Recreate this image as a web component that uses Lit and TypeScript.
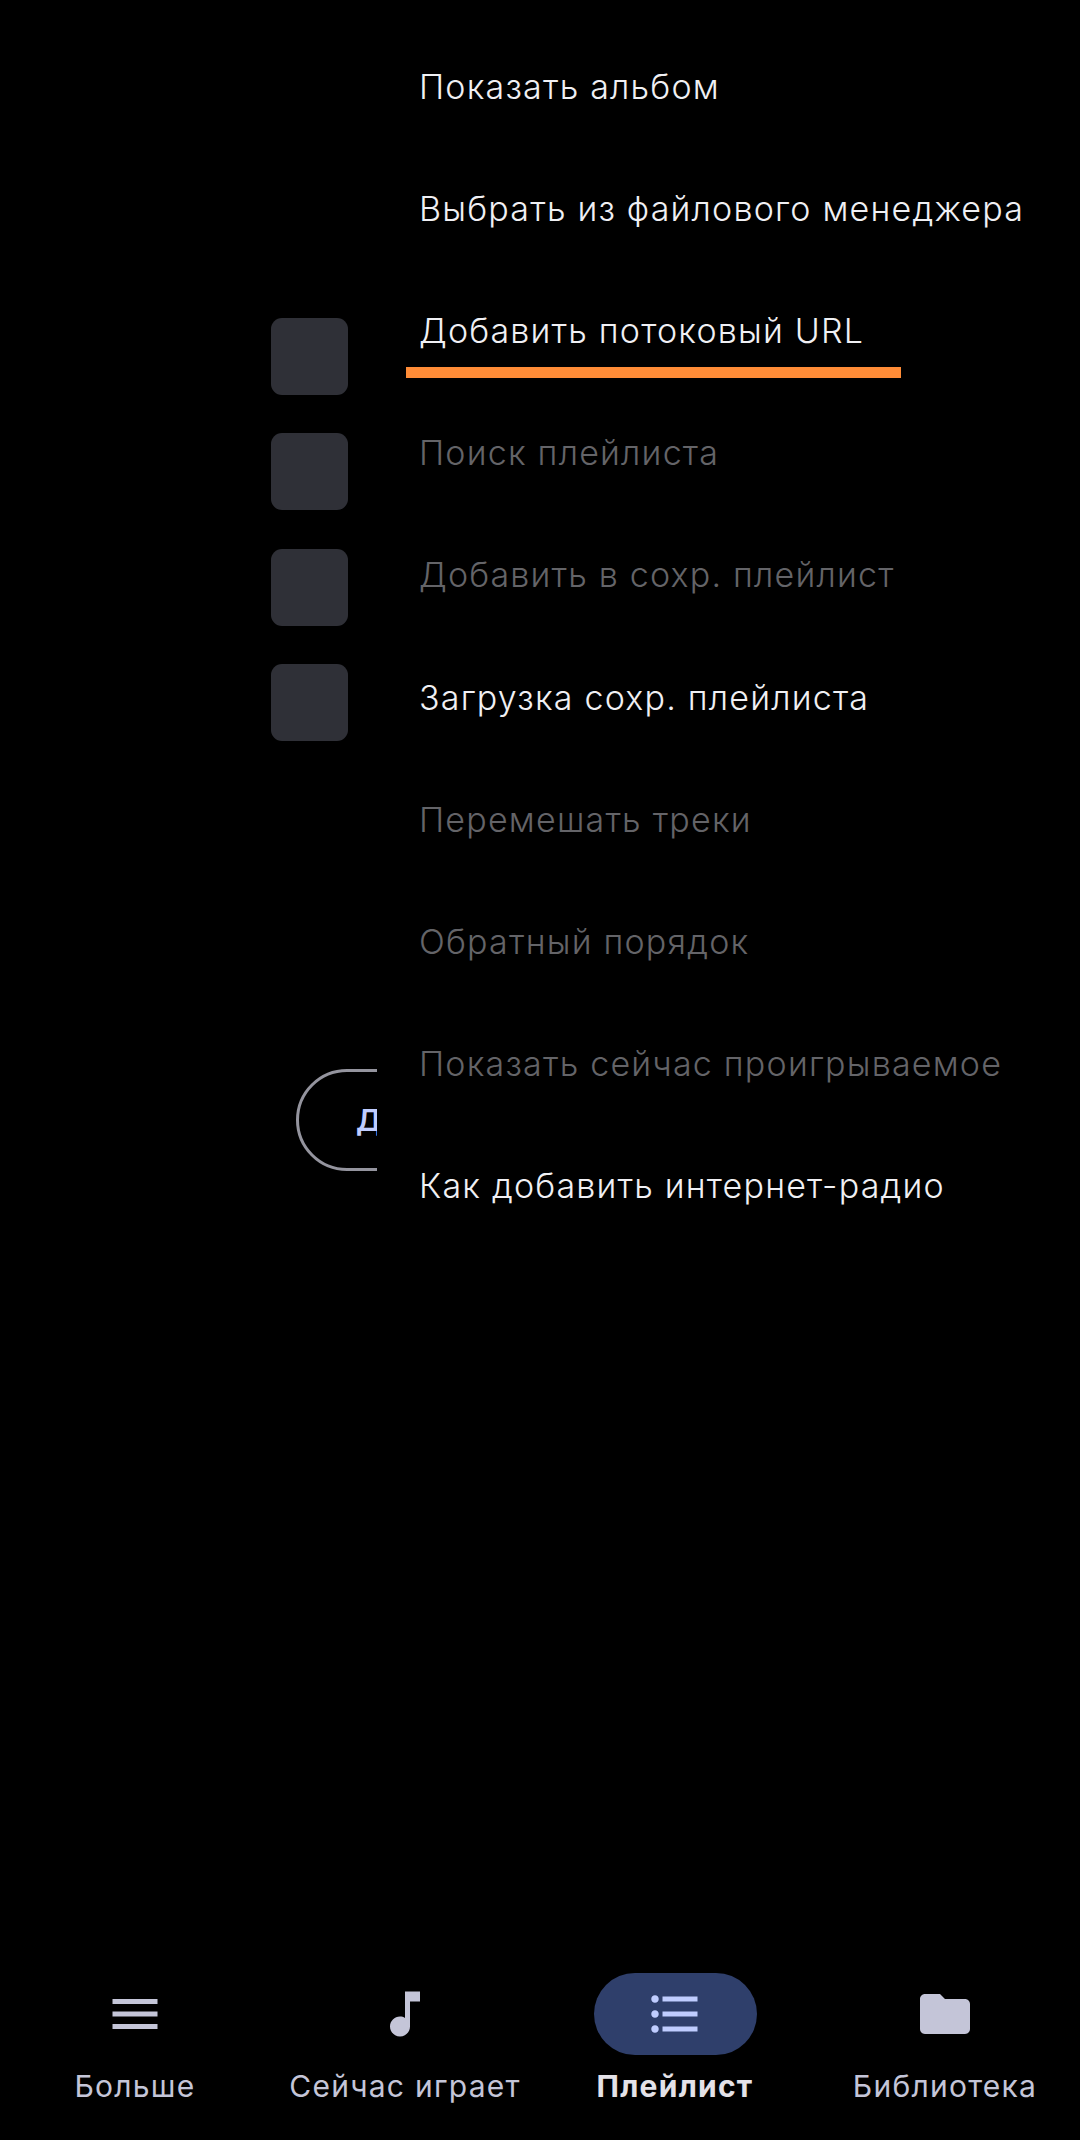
import { LitElement, html, css, svg } from 'lit'
import { customElement } from 'lit/decorators.js'

const menuItems = [
  { label: 'Показать альбом', off: false },
  { label: 'Выбрать из файлового менеджера', off: false },
  { label: 'Добавить потоковый URL', off: false },
  { label: 'Поиск плейлиста', off: true },
  { label: 'Добавить в сохр. плейлист', off: true },
  { label: 'Загрузка сохр. плейлиста', off: false },
  { label: 'Перемешать треки', off: true },
  { label: 'Обратный порядок', off: true },
  { label: 'Показать сейчас проигрываемое', off: true },
  { label: 'Как добавить интернет-радио', off: false },
]

const tabs = [
  { label: 'Больше', icon: svg`<path d="M3 18h18v-2H3v2zm0-5h18v-2H3v2zm0-7v2h18V6H3z" />` },
  { label: 'Сейчас играет', icon: svg`<path d="M12 3v10.55c-.59-.34-1.27-.55-2-.55-2.21 0-4 1.79-4 4s1.79 4 4 4 4-1.79 4-4V7h4V3h-6z" />` },
  { label: 'Плейлист', active: true, icon: svg`<path d="M4 10.5c-.83 0-1.5.67-1.5 1.5s.67 1.5 1.5 1.5 1.5-.67 1.5-1.5-.67-1.5-1.5-1.5zm0-6c-.83 0-1.5.67-1.5 1.5S3.17 7.5 4 7.5 5.5 6.83 5.5 6 4.83 4.5 4 4.5zm0 12c-.83 0-1.5.68-1.5 1.5s.68 1.5 1.5 1.5 1.5-.68 1.5-1.5-.67-1.5-1.5-1.5zM7 19h14v-2H7v2zm0-6h14v-2H7v2zm0-8v2h14V5H7z" />` },
  { label: 'Библиотека', icon: svg`<path d="M10 4H4c-1.1 0-2 .9-2 2v12c0 1.1.9 2 2 2h16c1.1 0 2-.9 2-2V8c0-1.1-.9-2-2-2h-8l-2-2z" />` },
]

@customElement('app-root')
export class AppRoot extends LitElement {
  static styles = css`
    :host {
      display: flex;
      flex-direction: column;
      position: relative;
      width: 1080px;
      height: 2140px;
      background: #000;
      overflow: hidden;
      font-family: 'Inter', sans-serif;
    }

    .squares {
      display: flex;
      flex-direction: column;
      gap: 38.3px;
      padding: 318px 0 0 271px;
    }

    .square {
      width: 77px;
      height: 77px;
      border-radius: 11px;
      background: #2f3037;
    }

    .outline {
      box-sizing: border-box;
      width: 320px;
      height: 102px;
      margin: 328px 0 0 296px;
      padding-left: 57px;
      display: flex;
      align-items: center;
      border: 3px solid #94949e;
      border-radius: 51px;
      font-size: 30px;
      font-weight: 600;
      color: #c0cdff;
    }

    .menu {
      position: absolute;
      top: 0;
      left: 377px;
      right: 0;
      padding: 25px 0 0 42px;
      height: 1274px;
      background: #000;
    }

    .item {
      height: 122.2px;
      display: flex;
      align-items: center;
      font-size: 34px;
      font-weight: 300;
      letter-spacing: 1.2px;
      color: #f0f0f4;
      white-space: nowrap;
    }

    .item.off {
      color: #646468;
    }

    .mark {
      position: absolute;
      left: 406px;
      top: 367px;
      width: 495px;
      height: 11px;
      background: #ff8c37;
    }

    nav {
      margin-top: auto;
      display: grid;
      grid-template-columns: repeat(4, 1fr);
      padding-bottom: 34px;
    }

    .tab {
      display: flex;
      flex-direction: column;
      align-items: center;
      gap: 11px;
    }

    .pill {
      width: 163px;
      height: 82px;
      border-radius: 41px;
      display: flex;
      align-items: center;
      justify-content: center;
    }

    .pill svg {
      width: 60px;
      height: 60px;
      fill: #c4c5d8;
    }

    .label {
      font-size: 30px;
      line-height: 40px;
      letter-spacing: 1.25px;
      color: #c4c5d8;
      white-space: nowrap;
    }

    .tab.active .pill {
      background: #2f3f6b;
    }

    .tab.active .pill svg {
      fill: #c0cdff;
    }

    .tab.active .label {
      font-weight: 700;
      color: #e4e2e8;
    }
  `

  render() {
    return html`
      <div class="squares">
        ${[0, 1, 2, 3].map(() => html`<div class="square"></div>`)}
      </div>
      <div class="outline">Добавить</div>

      <div class="menu">
        ${menuItems.map((item) => html`<div class="item ${item.off ? 'off' : ''}">${item.label}</div>`)}
      </div>
      <div class="mark"></div>

      <nav>
        ${tabs.map(
          (tab) => html`
            <div class="tab ${tab.active ? 'active' : ''}">
              <div class="pill"><svg viewBox="0 0 24 24">${tab.icon}</svg></div>
              <div class="label">${tab.label}</div>
            </div>
          `
        )}
      </nav>
    `
  }
}
